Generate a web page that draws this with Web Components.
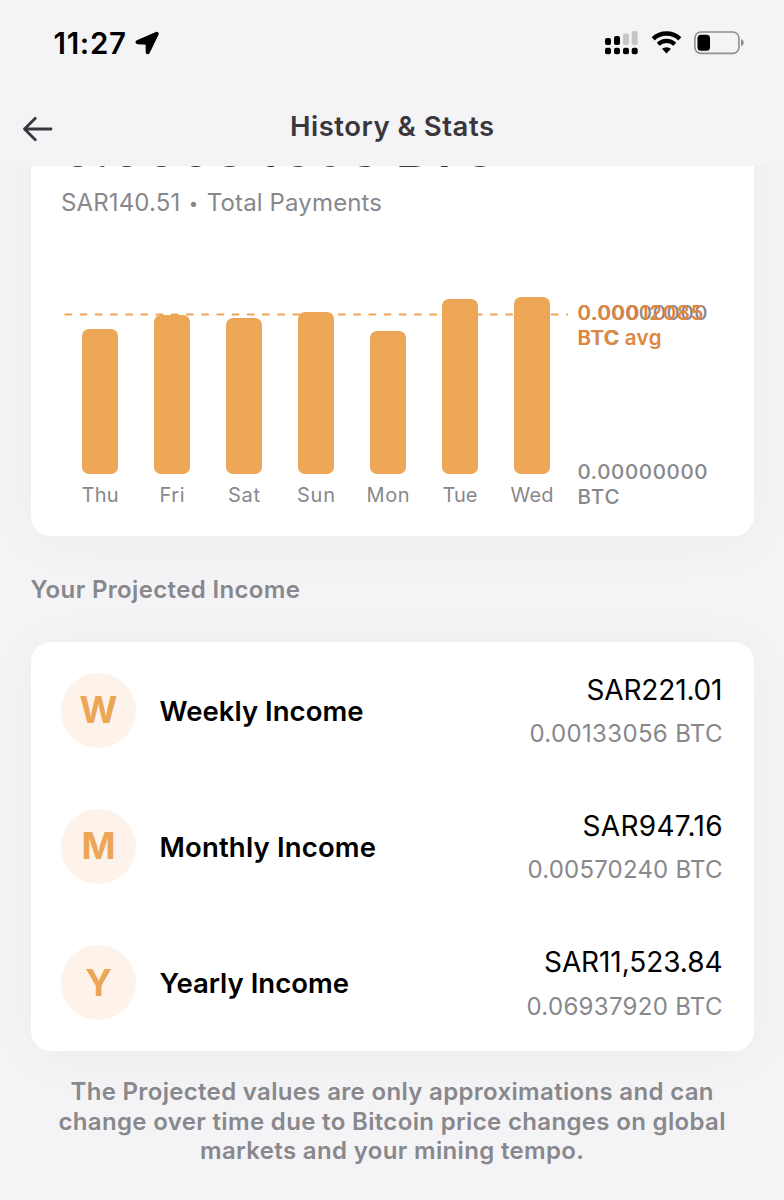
<!DOCTYPE html>
<html lang="en">
<head>
<meta charset="utf-8">
<title>History &amp; Stats</title>
<style>
    body {
        margin: 0;
        background: #f4f4f7;
        font-family: Inter, "Liberation Sans", sans-serif;
        color: #000;
        --accent: #eca656;
        --muted: #88888c;
    }
</style>
</head>
<body>
<stats-screen></stats-screen>

<script>
// Single line of text whose tracking is adjusted to a given width
class TextLine extends HTMLElement {
    constructor() {
        super();
        this.attachShadow({ mode: 'open' });
    }

    connectedCallback() {
        this.shadowRoot.innerHTML = `
            <style>
                :host {
                    display: block;
                    white-space: nowrap;
                }
                span {
                    display: inline-block;
                }
                small {
                    margin: 0 1.5px;
                    font-size: 0.7em;
                    vertical-align: 0.12em;
                }
            </style>
            <span>${this.getAttribute('text').replace('•', '<small>•</small>')}</span>
        `;
        const span = this.shadowRoot.querySelector('span');
        const width = Number(this.getAttribute('width'));
        if (width) {
            const count = span.textContent.length;
            const tracking = (width - span.getBoundingClientRect().width) / (count - 1);
            span.style.letterSpacing = `${tracking}px`;
            span.style.marginRight = `${-tracking}px`;
        }
    }
}

class StatusBar extends HTMLElement {
    constructor() {
        super();
        this.attachShadow({ mode: 'open' });
    }

    connectedCallback() {
        this.shadowRoot.innerHTML = `
            <style>
                :host {
                    display: flex;
                    align-items: center;
                    height: 86px;
                    padding: 0 40px 0 53.5px;
                    font-size: 29.5px;
                    font-weight: 600;
                }
                .arrow {
                    margin-left: 9px;
                }
                .signal {
                    margin-left: auto;
                }
                .wifi {
                    margin: 0 12px 0 13px;
                }
                svg {
                    display: block;
                }
            </style>
            <text-line text="11:27" width="72.5"></text-line>
            <svg class="arrow" width="24" height="24" viewBox="0 0 24 24">
                <path d="M21.7 2.8 L2.6 11.2 L12.6 11.7 L12.7 21.3 Z" stroke="#000" stroke-width="4" stroke-linejoin="round"/>
            </svg>
            <svg class="signal" width="33" height="24" viewBox="0 0 33 24">
                <rect x="0" y="7" width="6" height="7" rx="2"/>
                <rect x="9" y="5" width="6" height="9" rx="2"/>
                <rect x="18" y="2.4" width="6" height="11.6" rx="2" fill="#c5c5c7"/>
                <rect x="26.7" y="0" width="6" height="14" rx="2" fill="#c5c5c7"/>
                <rect x="0" y="16.8" width="6" height="6.4" rx="2"/>
                <rect x="9" y="16.8" width="6" height="6.4" rx="2"/>
                <rect x="18" y="16.8" width="6" height="6.4" rx="2"/>
                <rect x="26.7" y="16.8" width="6" height="6.4" rx="2"/>
            </svg>
            <svg class="wifi" width="31" height="24" viewBox="0 0 31 24">
                <path d="M2.2 7.8 A19.5 19.5 0 0 1 28.8 7.8" fill="none" stroke="#000" stroke-width="4.4"/>
                <path d="M7.2 13.2 A12.2 12.2 0 0 1 23.8 13.2" fill="none" stroke="#000" stroke-width="4.2"/>
                <path d="M11 17.8 A7 7 0 0 1 20 17.8 L15.5 22.5 Z"/>
            </svg>
            <svg width="50" height="24" viewBox="0 0 50 24">
                <rect x="0.9" y="1" width="44" height="21.4" rx="6" fill="none" stroke="#8f8f92" stroke-width="1.6"/>
                <rect x="3.5" y="3.7" width="12.5" height="16" rx="3.5"/>
                <path d="M47 8.1 Q49.8 9.1 49.8 11.7 Q49.8 14.3 47 15.3 Z" fill="#8f8f92"/>
            </svg>
        `;
    }
}

class NavHeader extends HTMLElement {
    constructor() {
        super();
        this.attachShadow({ mode: 'open' });
    }

    connectedCallback() {
        this.shadowRoot.innerHTML = `
            <style>
                :host {
                    display: grid;
                    grid-template-columns: 1fr auto 1fr;
                    align-items: center;
                    height: 80px;
                    padding: 0 22px;
                    color: #3a363b;
                    font-size: 27.5px;
                    font-weight: 600;
                }
                svg {
                    display: block;
                    margin-top: 6px;
                }
            </style>
            <svg width="32" height="26" viewBox="0 0 32 26" fill="none" stroke="#3a363b" stroke-width="2.8" stroke-linecap="round" stroke-linejoin="round">
                <path d="M13.3 2.2 L2.5 13 L13.3 23.8 M2.5 13 H29"/>
            </svg>
            <text-line text="History &amp;amp; Stats" width="204"></text-line>
        `;
    }
}

class SurfaceCard extends HTMLElement {
    constructor() {
        super();
        this.attachShadow({ mode: 'open' });
    }

    connectedCallback() {
        this.shadowRoot.innerHTML = `
            <style>
                :host {
                    display: block;
                    box-sizing: border-box;
                    background: #fff;
                    border-radius: 20px;
                    box-shadow: 0 6px 60px rgba(0, 0, 20, 0.035);
                }
            </style>
            <slot></slot>
        `;
    }
}

class PayoutChart extends HTMLElement {
    constructor() {
        super();
        this.attachShadow({ mode: 'open' });
    }

    connectedCallback() {
        const days = [
            { name: 'Thu', height: 145, width: 37 },
            { name: 'Fri', height: 158.5, width: 25 },
            { name: 'Sat', height: 155.5, width: 32 },
            { name: 'Sun', height: 161.5, width: 38 },
            { name: 'Mon', height: 142.5, width: 43 },
            { name: 'Tue', height: 174.5, width: 35 },
            { name: 'Wed', height: 176.5, width: 43 }
        ];
        this.shadowRoot.innerHTML = `
            <style>
                :host {
                    display: flex;
                    color: var(--muted);
                    font-size: 20px;
                }
                .plot {
                    position: relative;
                    width: 504px;
                }
                .bars {
                    display: grid;
                    grid-template-columns: repeat(7, 72px);
                    justify-items: center;
                }
                .day {
                    display: flex;
                    flex-direction: column;
                    align-items: center;
                    justify-content: flex-end;
                    height: 220px;
                }
                .bar {
                    width: 36.5px;
                    border-radius: 7px;
                    background: var(--accent);
                }
                .day text-line {
                    height: 30px;
                    line-height: 30px;
                    margin-top: 6.5px;
                }
                .average {
                    position: absolute;
                    left: 0;
                    top: 23px;
                }
                .axis {
                    display: grid;
                    align-content: space-between;
                    box-sizing: border-box;
                    height: 220px;
                    padding: 9.5px 0 1.5px;
                    margin-left: 9.5px;
                    font-weight: 500;
                    font-size: 20.5px;
                    line-height: 25px;
                }
                .top {
                    display: grid;
                }
                .top div {
                    grid-area: 1 / 1;
                }
                .mean {
                    color: #df8741;
                    font-weight: 600;
                }
            </style>
            <div class="plot">
                <div class="bars">
                    ${days.map(day => `
                        <div class="day">
                            <div class="bar" style="height: ${day.height}px"></div>
                            <text-line text="${day.name}" width="${day.width}"></text-line>
                        </div>
                    `).join('')}
                </div>
                <svg class="average" width="506" height="3" viewBox="0 0 506 3">
                    <path d="M0.5 1.5 H504" stroke="#eca656" stroke-width="2" stroke-dasharray="7.6 7.6"/>
                </svg>
            </div>
            <div class="axis">
                <div class="top">
                    <div>
                        <text-line text="0.00000000" width="130"></text-line>
                        <text-line text="BTC" width="42"></text-line>
                    </div>
                    <div class="mean">
                        <text-line text="0.00012085" width="126"></text-line>
                        <text-line text="BTC avg" width="84"></text-line>
                    </div>
                </div>
                <div>
                    <text-line text="0.00000000" width="130"></text-line>
                    <text-line text="BTC" width="42"></text-line>
                </div>
            </div>
        `;
    }
}

class IncomeRow extends HTMLElement {
    constructor() {
        super();
        this.attachShadow({ mode: 'open' });
    }

    connectedCallback() {
        const get = name => this.getAttribute(name);
        this.shadowRoot.innerHTML = `
            <style>
                :host {
                    display: flex;
                    align-items: center;
                    height: 136.3px;
                    padding: 0 31px 0 30.5px;
                }
                .badge {
                    display: grid;
                    place-items: center;
                    width: 75px;
                    height: 75px;
                    margin-right: 23.5px;
                    border-radius: 50%;
                    background: #fdf3ea;
                    color: var(--accent);
                    font-size: 36.5px;
                    font-weight: 700;
                }
                .label {
                    padding-top: 1px;
                    font-size: 27.5px;
                    font-weight: 600;
                }
                .values {
                    display: grid;
                    justify-items: end;
                    margin-left: auto;
                    padding-top: 4px;
                    font-size: 28px;
                    line-height: 43.5px;
                }
                .btc {
                    color: var(--muted);
                    font-size: 24px;
                }
            </style>
            <div class="badge"><text-line text="${get('letter')}" width="0"></text-line></div>
            <text-line class="label" text="${get('label')}" width="${get('label-width')}"></text-line>
            <div class="values">
                <text-line text="${get('amount')}" width="${get('amount-width')}"></text-line>
                <text-line class="btc" text="${get('btc')}" width="${get('btc-width')}"></text-line>
            </div>
        `;
    }
}

class StatsScreen extends HTMLElement {
    constructor() {
        super();
        this.attachShadow({ mode: 'open' });
    }

    connectedCallback() {
        this.shadowRoot.innerHTML = `
            <style>
                :host {
                    display: block;
                    height: 1200px;
                    overflow: hidden;
                }
                main {
                    height: 1034px;
                    padding: 0 30.5px;
                    overflow: hidden;
                }
                .payments {
                    height: 420px;
                    margin-top: -50px;
                    padding: 0 30.5px;
                }
                .total {
                    height: 66px;
                    line-height: 65px;
                    font-size: 51px;
                    font-weight: 600;
                    color: #3a363b;
                }
                .subtitle {
                    height: 40px;
                    line-height: 41.5px;
                    font-size: 24px;
                    color: var(--muted);
                }
                payout-chart {
                    margin: 68px 0 0 3px;
                }
                .section {
                    height: 106px;
                    line-height: 107px;
                    font-size: 24px;
                    font-weight: 600;
                    color: var(--muted);
                }
                .note {
                    display: grid;
                    justify-items: center;
                    margin-top: 26.5px;
                    font-size: 24px;
                    font-weight: 600;
                    line-height: 29.3px;
                    color: var(--muted);
                }
            </style>
            <status-bar></status-bar>
            <nav-header></nav-header>
            <main>
                <surface-card class="payments">
                    <text-line class="total" text="0.00084593 BTC" width="437"></text-line>
                    <text-line class="subtitle" text="SAR140.51 • Total Payments" width="321"></text-line>
                    <payout-chart></payout-chart>
                </surface-card>
                <text-line class="section" text="Your Projected Income" width="269.5"></text-line>
                <surface-card>
                    <income-row letter="W" label="Weekly Income" label-width="204" amount="SAR221.01" amount-width="136" btc="0.00133056 BTC" btc-width="193"></income-row>
                    <income-row letter="M" label="Monthly Income" label-width="216.5" amount="SAR947.16" amount-width="140" btc="0.00570240 BTC" btc-width="195"></income-row>
                    <income-row letter="Y" label="Yearly Income" label-width="189.5" amount="SAR11,523.84" amount-width="178.5" btc="0.06937920 BTC" btc-width="196"></income-row>
                </surface-card>
                <div class="note">
                    <text-line text="The Projected values are only approximations and can" width="643"></text-line>
                    <text-line text="change over time due to Bitcoin price changes on global" width="667"></text-line>
                    <text-line text="markets and your mining tempo." width="384"></text-line>
                </div>
            </main>
        `;
    }
}

customElements.define('text-line', TextLine);
customElements.define('status-bar', StatusBar);
customElements.define('nav-header', NavHeader);
customElements.define('surface-card', SurfaceCard);
customElements.define('payout-chart', PayoutChart);
customElements.define('income-row', IncomeRow);
customElements.define('stats-screen', StatsScreen);
</script>
</body>
</html>
